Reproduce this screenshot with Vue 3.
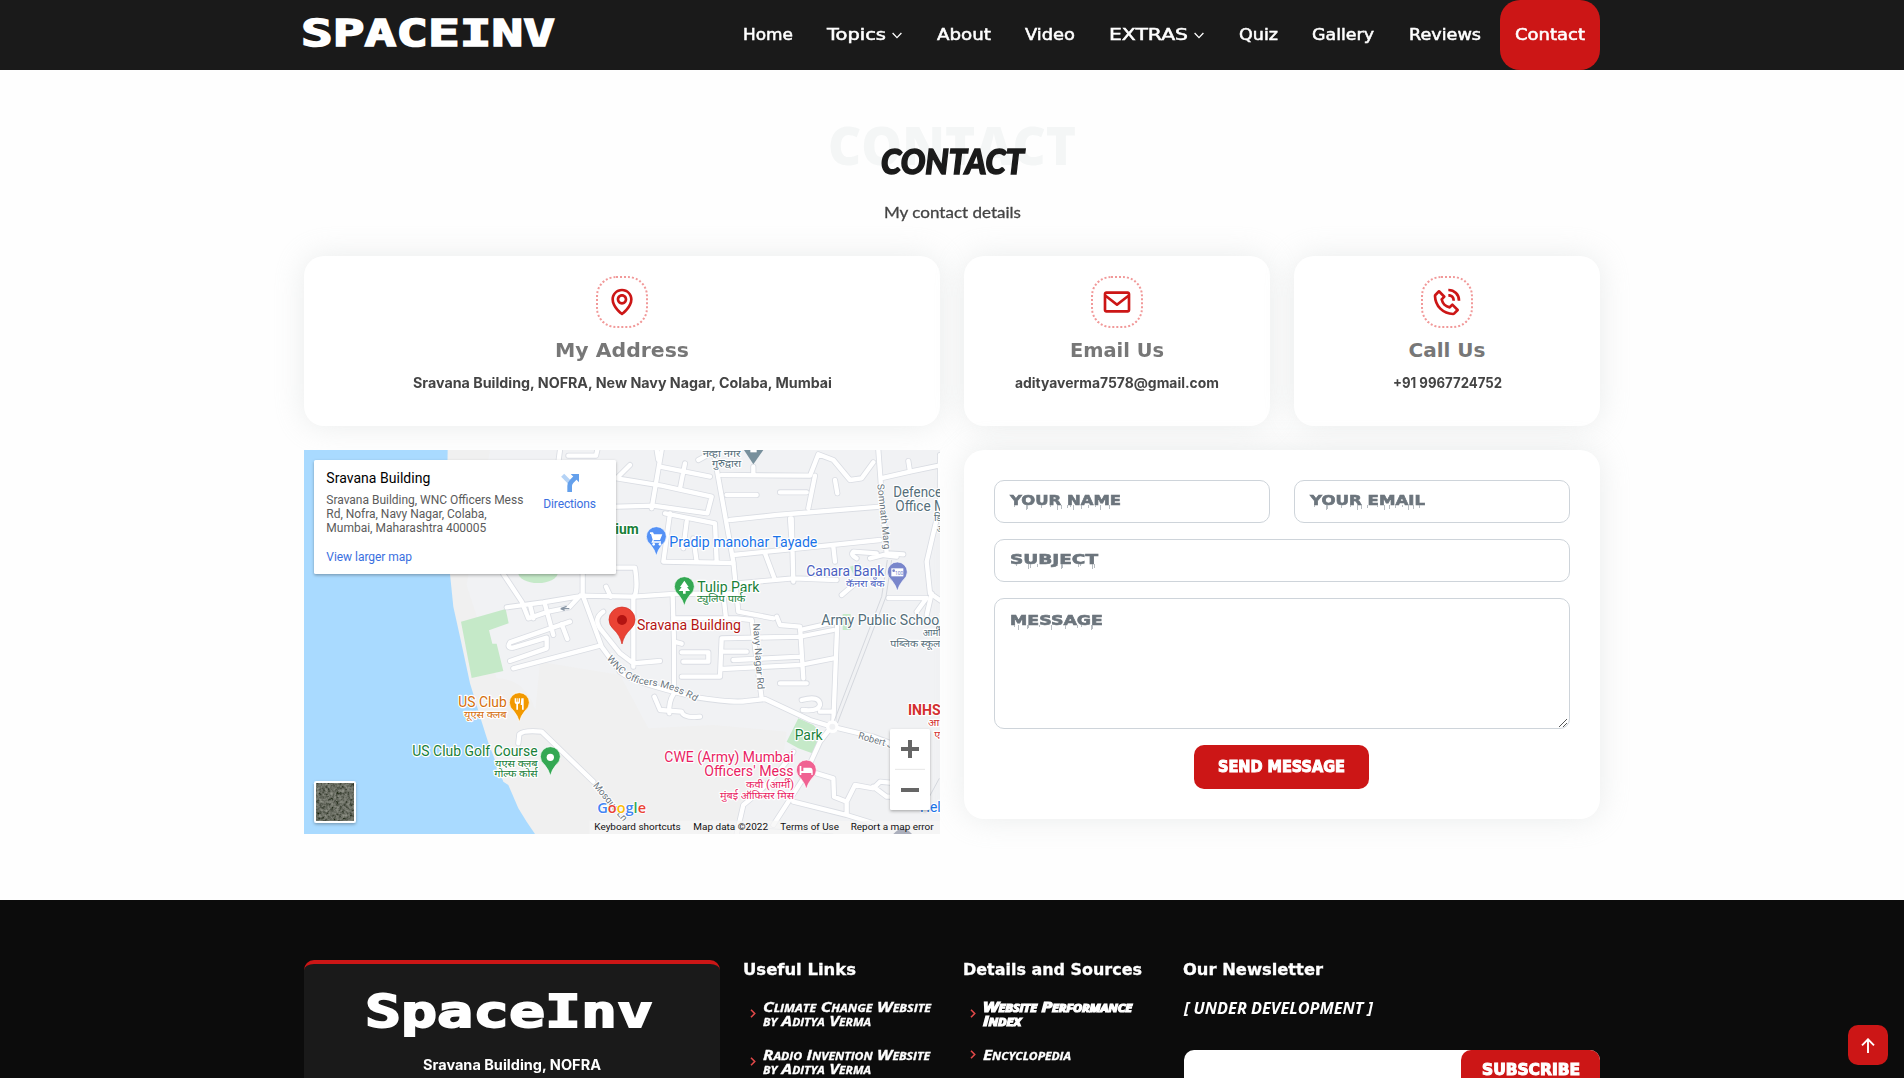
<script setup>
/* Stretches a label horizontally to the given width, in flow */
const vFit = {
  mounted(el, { value }) {
    const width = el.getBoundingClientRect().width
    el.style.transform = `scaleX(${value / width})`
    el.style.marginRight = `${value - width}px`
  },
}

const nav = [
  { label: 'Home', w: 50 },
  { label: 'Topics', w: 59, menu: true },
  { label: 'About', w: 54 },
  { label: 'Video', w: 50 },
  { label: 'EXTRAS', w: 79, menu: true },
  { label: 'Quiz', w: 39 },
  { label: 'Gallery', w: 62 },
  { label: 'Reviews', w: 72 },
  { label: 'Contact', w: 70, active: true },
]

const cards = [
  {
    title: 'My Address', tw: 134, text: 'Sravana Building, NOFRA, New Navy Nagar, Colaba, Mumbai', w: 419,
    paths: [
      'M12 14c2.206 0 4-1.794 4-4s-1.794-4-4-4-4 1.794-4 4 1.794 4 4 4zm0-6c1.103 0 2 .897 2 2s-.897 2-2 2-2-.897-2-2 .897-2 2-2z',
      'M11.42 21.814a.998.998 0 0 0 1.16 0C12.884 21.599 20.029 16.44 20 10c0-4.411-3.589-8-8-8S4 5.589 4 9.995c-.029 6.445 7.116 11.604 7.42 11.819zM12 4c3.309 0 6 2.691 6 6.005.021 4.438-4.388 8.423-6 9.73-1.611-1.308-6.021-5.294-6-9.735 0-3.309 2.691-6 6-6z',
    ],
  },
  {
    title: 'Email Us', tw: 94, text: 'adityaverma7578@gmail.com', w: 204,
    paths: ['M20 4H4c-1.103 0-2 .897-2 2v12c0 1.103.897 2 2 2h16c1.103 0 2-.897 2-2V6c0-1.103-.897-2-2-2zm0 2v.511l-8 6.223-8-6.222V6h16zM4 18V9.044l7.386 5.745a.994.994 0 0 0 1.228 0L20 9.044 20.002 18H4z'],
  },
  {
    title: 'Call Us', tw: 77, text: '+91 9967724752', w: 109,
    paths: [
      'M16.57 22a2 2 0 0 0 1.43-.59l2.71-2.71a1 1 0 0 0 0-1.41l-4-4a1 1 0 0 0-1.41 0l-1.6 1.59a7.55 7.55 0 0 1-3-1.59 7.62 7.62 0 0 1-1.59-3l1.59-1.6a1 1 0 0 0 0-1.41l-4-4a1 1 0 0 0-1.41 0L2.59 6A2 2 0 0 0 2 7.43 15.28 15.28 0 0 0 6.3 17.7 15.28 15.28 0 0 0 16.57 22zM6 5.41 8.59 8 7.3 9.29a1 1 0 0 0-.3.91 10.12 10.12 0 0 0 2.3 4.5 10.08 10.08 0 0 0 4.5 2.3 1 1 0 0 0 .91-.27L16 15.41 18.59 18l-2 2a13.28 13.28 0 0 1-8.87-3.71A13.28 13.28 0 0 1 4 7.41zM20 11h2a8.81 8.81 0 0 0-9-9v2a6.77 6.77 0 0 1 7 7z',
      'M13 8c2.1 0 3 .9 3 3h2c0-3.22-1.78-5-5-5z',
    ],
  },
]

const fields = [
  { label: 'YOUR NAME', w: 111, kind: 'half', drips: [4, 16, 17, 31, 40, 47, 51, 57, 60, 63, 71, 78, 85, 90, 99] },
  { label: 'YOUR EMAIL', w: 115, kind: 'half', drips: [4, 16, 17, 31, 40, 47, 51, 57, 67, 74, 79, 85, 92, 98, 103, 109] },
  { label: 'SUBJECT', w: 88, kind: 'full', drips: [6, 18, 20, 27, 47, 51, 52, 68, 70, 82, 84] },
  { label: 'MESSAGE', w: 93, kind: 'area', drips: [4, 8, 17, 18, 29, 41, 55, 67, 71, 81, 82] },
]

const linkCols = [
  {
    title: 'Useful Links', tw: 113,
    items: [
      [{ t: 'Climate Change Website', w: 168 }, { t: 'by Aditya Verma', w: 108 }],
      [{ t: 'Radio Invention Website', w: 167 }, { t: 'by Aditya Verma', w: 108 }],
    ],
  },
  {
    title: 'Details and Sources', tw: 179,
    items: [
      [{ t: 'Website Performance', w: 149, heavy: true }, { t: 'Index', w: 38, heavy: true }],
      [{ t: 'Encyclopedia', w: 88 }],
    ],
  },
]

/* Street network, in the map's own units (three per pixel) */
const roads = [
  'M780 15L776 45M805 32H888L892 15M990 60L950 100L1085 122L1235 155L1222 205L1060 182L880 187',
  'M610 387L665 470L685 520L745 500L808 487L840 452M620 487L730 472L850 452L1000 455L1120 447L1300 445',
  'M848 387V450L905 605L960 680M690 480L700 520M735 478L760 570M810 530L630 592Q618 610 640 608L740 578V610L630 648M785 537L802 582M640 670L900 602M918 425L932 455M940 368H1005Q1015 430 1003 455',
  'M910 500Q880 520 900 550L960 625L1000 655L1080 648M1000 455V665M1118 455L1122 590V745Q1105 770 1108 805M1145 596L1122 590',
  'M1063 755L1080 795L1145 800Q1150 820 1200 815',
  'M655 895L658 868Q670 855 725 860L880 1010M960 680Q990 710 1180 755Q1300 775 1340 768L1395 762L1530 825L1595 845',
  'M1595 845L1560 890L1510 1000L1420 1140M1595 845L1720 875L1800 905M1480 920Q1430 1000 1330 1080L1310 1167M1550 985L1600 1000L1602 1055L1640 1070L1665 1020L1720 1030L1740 1010L1790 1015L1795 1055L1760 1055L1720 1025M1480 1070L1640 1110L1720 1135M1640 1070V1110',
  'M1070 15L1075 45M1055 190L1085 15M1080 65L1230 95M1140 130L1155 55M1195 45L1250 15M1160 230L1150 310M1110 205L1090 350L1300 354M1095 205L1245 235L1250 350M1180 280L1190 350',
  'M1240 15L1300 350L1315 500L1420 520M1265 90L1530 92L1555 28L1600 45L1650 105L1685 100L1720 52M1280 150H1370M1290 225L1430 210L1740 185M1525 190L1545 92M1440 142H1520M1605 105L1612 145M1360 65V90',
  'M1300 330L1500 310L1740 285M1395 325L1425 405M1475 220L1480 410M1600 305L1605 350M1315 415L1480 400L1610 405M1270 450L1278 520M1120 520H1310L1355 525Q1370 650 1385 760',
  'M1470 220L1475 290M1710 340L1750 330L1790 335M1670 340Q1650 330 1660 320L1730 325M1625 450L1660 420',
  'M1735 15L1742 110L1760 325L1810 328M1742 100L1830 80L1925 60M1920 30V180L1880 350L1890 445L1970 500M1765 459H1880L1850 500M1830 80L1825 48M1500 555L1612 530L1600 830L1595 845',
  'M1430 515L1440 540L1500 545L1510 700M1440 715H1520M1265 580L1500 575L1600 555M1265 580L1260 695H1145M1145 622H1225V650H1150M1265 620H1340M1265 672L1500 660L1600 640M1500 635L1300 645',
  'M1505 765Q1560 750 1560 780Q1555 800 1508 795M1560 800H1595M1895 445L1880 510',
]

const pins = [
  { x: 658, y: 830, c: '#f29900' }, { x: 751, y: 992, c: '#34a853' },
  { x: 1069, y: 332, c: '#5491f5' }, { x: 1153, y: 482, c: '#34a853' },
  { x: 1792, y: 438, c: '#7986cb' }, { x: 1519, y: 1032, c: '#f06292' },
]

const labels = [
  { t: 'US Club', x: 475, y: 786, w: 145, c: '#d56e0c' },
  { t: 'यूएस क्लब', x: 492, y: 820, w: 128, c: '#d56e0c', s: 30 },
  { t: 'US Club Golf Course', x: 337, y: 933, w: 376, c: '#188038' },
  { t: 'यूएस क्लब', x: 585, y: 965, w: 128, c: '#188038', s: 30 },
  { t: 'गोल्फ कोर्स', x: 583, y: 997, w: 130, c: '#188038', s: 30 },
  { t: 'ium', x: 946, y: 267, w: 70, c: '#188038', b: true },
  { t: 'Pradip manohar Tayade', x: 1108, y: 306, w: 444, c: '#1a73e8' },
  { t: 'Tulip Park', x: 1192, y: 441, w: 186, c: '#188038' },
  { t: 'ट्युलिप पार्क', x: 1191, y: 472, w: 145, c: '#188038', s: 30 },
  { t: 'Sravana Building', x: 1011, y: 555, w: 312, c: '#b31412' },
  { t: 'Canara Bank', x: 1519, y: 393, w: 234, c: '#4b5fc1' },
  { t: 'कॅनरा बॅंक', x: 1638, y: 426, w: 116, c: '#4b5fc1', s: 30 },
  { t: 'नव्हा नगर', x: 1208, y: 35, w: 114, c: '#546e7a', s: 30 },
  { t: 'गुरुद्वारा', x: 1236, y: 67, w: 87, c: '#546e7a', s: 30 },
  { t: 'Defence', x: 1780, y: 156, w: 146, c: '#546e7a' },
  { t: 'Office M', x: 1786, y: 198, w: 152, c: '#546e7a' },
  { t: 'डि', x: 1902, y: 228, w: 24, c: '#546e7a', s: 30 },
  { t: 'ऑ', x: 1910, y: 260, w: 26, c: '#546e7a', s: 30 },
  { t: 'Army Public School', x: 1564, y: 540, w: 364, c: '#546e7a' },
  { t: 'आर्मी', x: 1868, y: 574, w: 54, c: '#546e7a', s: 30 },
  { t: 'पब्लिक स्कूल', x: 1771, y: 606, w: 150, c: '#546e7a', s: 30 },
  { t: 'INHS', x: 1824, y: 809, w: 98, c: '#d32f2f', b: true },
  { t: 'आ', x: 1884, y: 844, w: 34, c: '#d32f2f', s: 30 },
  { t: 'ए', x: 1903, y: 878, w: 18, c: '#d32f2f', s: 30 },
  { t: 'Park', x: 1484, y: 885, w: 84, c: '#188038' },
  { t: 'CWE (Army) Mumbai', x: 1093, y: 951, w: 388, c: '#e91e63' },
  { t: "Officers' Mess", x: 1213, y: 992, w: 268, c: '#e91e63' },
  { t: 'कवी (आर्मी)', x: 1338, y: 1029, w: 144, c: '#e91e63', s: 30 },
  { t: 'मुंबई ऑफिसर मिस', x: 1260, y: 1061, w: 222, c: '#e91e63', s: 30 },
  { t: 'Hel', x: 1860, y: 1102, w: 62, c: '#1a73e8' },
]

const streets = [
  { t: 'Navy Nagar Rd', x: 1359, y: 536, r: 86, w: 198 },
  { t: 'Somnath Marg', x: 1732, y: 118, r: 84, w: 197 },
  { t: 'Robert J', x: 1673, y: 880, r: 16, w: 106 },
  { t: 'Mosque Ln', x: 878, y: 1022, r: 50, w: 142 },
]

const credits = [
  { t: 'Keyboard shortcuts', x: 883, w: 259 },
  { t: 'Map data ©2022', x: 1180, w: 224 },
  { t: 'Terms of Use', x: 1441, w: 176 },
  { t: 'Report a map error', x: 1652, w: 249 },
]
</script>

<template>
  <div class="page">
    <header class="top">
      <div class="wrap bar">
        <svg class="brand" width="262" height="40" viewBox="0 0 262 40">
          <text x="0" y="34" textLength="254" lengthAdjust="spacingAndGlyphs">SPACEINV</text>
        </svg>
        <nav class="nav">
          <a v-for="n in nav" :key="n.label" :class="{ active: n.active }">
            <span v-fit="n.w">{{ n.label }}</span>
            <svg v-if="n.menu" width="10" height="7" viewBox="0 0 10 7"><path d="M.6 1l4.4 4.6L9.4 1" /></svg>
          </a>
        </nav>
      </div>
    </header>

    <main class="wrap main">
      <div class="title">
        <span class="ghost"><b v-fit="248">CONTACT</b></span>
        <h2><span v-fit="143">CONTACT</span></h2>
        <p><span v-fit="137">My contact details</span></p>
      </div>

      <div class="grid">
        <section v-for="(c, i) in cards" :key="c.title" class="card info" :class="{ wide: i === 0 }">
          <div class="ring">
            <svg width="32" height="32" viewBox="0 0 24 24"><path v-for="p in c.paths" :key="p" :d="p" /></svg>
          </div>
          <h3><span v-fit="c.tw">{{ c.title }}</span></h3>
          <p><span v-fit="c.w">{{ c.text }}</span></p>
        </section>

        <svg class="map wide" width="636" height="384" viewBox="12 15 1908 1152">
          <defs>
            <filter id="noise" x="0" y="0" width="1" height="1">
              <feTurbulence type="fractalNoise" baseFrequency=".12" numOctaves="3" seed="4" />
              <feColorMatrix values=".4 0 0 0 -.06  .4 0 0 0 -.05  .36 0 0 0 -.06  0 0 0 0 1" />
            </filter>
            <filter id="drop" x="-10%" y="-10%" width="120%" height="130%">
              <feDropShadow dx="0" dy="4" stdDeviation="5" flood-opacity=".3" />
            </filter>
            <path id="wnc" d="M920 640Q975 716 1045 720Q1120 728 1190 772" />
          </defs>
          <rect x="12" y="15" width="1908" height="1152" fill="#f1f2f4" />
          <path d="M400 15H570L500 420L590 700Q700 700 720 860L1020 1167H600L430 600zM720 650L960 690L1045 850L1240 840L1460 860L1440 1000L1330 1080L1290 1167H900L700 860z" fill="#f0f0f0" />
          <path d="M12 15H443L440 200L450 387L460 485L480 575L510 715L545 830L565 893L610 1010L625 1020L655 1090L680 1130L705 1167H12z" fill="#a9daff" />
          <g fill="#c5e9c8">
            <path d="M483 530L617 492L626 535L567 556L577 596H590L610 678L515 699zM1460 890L1495 820L1540 840L1570 870L1545 928L1495 910z" />
            <ellipse cx="714" cy="382" rx="60" ry="32" /><path d="M1628 507H1652V555H1628zM1650 365L1680 355L1665 400z" />
          </g>
          <g class="casing"><path v-for="r in roads" :key="r" :d="r" /></g>
          <g class="road"><path v-for="r in roads" :key="r" :d="r" /></g>
          <path d="M1762 345L1745 455L1600 835M1775 345L1758 455L1612 835M1918 1000L1880 1070M1400 1150L1600 1167" fill="none" stroke="#d5d8de" stroke-width="3" />
          <circle cx="1597" cy="845" r="14" fill="#f1f2f4" stroke="#fff" stroke-width="10" />
          <path d="M782 491L800 484M782 491L794 496M782 491H808" stroke="#8996a5" stroke-width="4" fill="none" />
          <g class="street">
            <text><textPath href="#wnc" textLength="305" lengthAdjust="spacingAndGlyphs">WNC Officers Mess Rd</textPath></text>
            <text v-for="s in streets" :key="s.t" :transform="`translate(${s.x} ${s.y}) rotate(${s.r})`" :textLength="s.w" lengthAdjust="spacingAndGlyphs">{{ s.t }}</text>
          </g>
          <g v-for="p in pins" :key="p.x" :transform="`translate(${p.x} ${p.y})`">
            <path d="M0 0Q-5-18-16-31Q-30-43-30-57A30 30 0 0 1 30-57Q30-43 16-31Q5-18 0 0z" :fill="p.c" stroke="#fff" stroke-width="2" />
          </g>
          <g fill="#fff">
            <path d="M644 760V772Q644 777 649 777V794H654V777Q660 777 660 772V760H656V770H653V760H650V770H648V760zM664 760H671V794H666V780H662z" />
            <circle cx="751" cy="937" r="11" />
            <path d="M1050 262H1059L1062 268H1087L1080 285H1062L1060 289H1083V293H1054L1058 284L1053 267H1050z" /><circle cx="1061" cy="298" r="4" /><circle cx="1080" cy="298" r="4" />
            <path d="M1153 407L1140 426H1145L1136 438H1149V446H1157V438H1170L1161 426H1166z" />
            <path d="M1774 370H1810V394H1774z" />
            <path d="M1499 963H1504V978H1510V968H1530Q1538 968 1538 978V990H1534V984H1504V990H1499z" />
          </g>
          <circle cx="1781" cy="377" r="4" fill="#7986cb" />
          <text x="1785" y="391" font-size="15" fill="#7986cb">100</text>
          <path d="M1332 15H1390L1360 58z" fill="#78909c" /><path d="M1351 15H1370V22H1351z" fill="#fff" />
          <path d="M966 597Q960 570 940 552Q927 540 927 524A39 38 0 0 1 1005 524Q1005 540 992 552Q972 570 966 597z" fill="#ea4335" stroke="#d22e22" stroke-width="2" />
          <circle cx="966" cy="525" r="15" fill="#b31412" />
          <g class="labels">
            <text v-for="l in labels" :key="l.t + l.y" :x="l.x" :y="l.y" :textLength="l.w" lengthAdjust="spacingAndGlyphs" :fill="l.c" :font-size="l.s || 42" :font-weight="l.b ? 700 : 400">{{ l.t }}</text>
          </g>
          <text x="892" y="1103" class="google" textLength="146" lengthAdjust="spacingAndGlyphs"><tspan fill="#4285f4">G</tspan><tspan fill="#ea4335">o</tspan><tspan fill="#fbbc05">o</tspan><tspan fill="#4285f4">g</tspan><tspan fill="#34a853">l</tspan><tspan fill="#ea4335">e</tspan></text>
          <path d="M868 1127H1920V1167H868z" fill="#f5f5f5" opacity=".75" />
          <path d="M1780 1167Q1808 1136 1836 1167z" fill="#abafbc" />
          <text v-for="c in credits" :key="c.t" :x="c.x" y="1155" :textLength="c.w" lengthAdjust="spacingAndGlyphs" font-size="29" fill="#111">{{ c.t }}</text>
          <g filter="url(#drop)">
            <rect x="42" y="45" width="906" height="342" rx="5" fill="#fff" />
            <rect x="1770" y="852" width="120" height="243" rx="5" fill="#fff" />
            <rect x="42" y="1008" width="126" height="126" rx="7" fill="#fff" />
          </g>
          <rect x="49" y="1015" width="112" height="112" filter="url(#noise)" />
          <path d="M1785 973H1875" stroke="#e6e6e6" stroke-width="3" />
          <path d="M1803 912H1857M1830 885V939M1803 1035H1857" stroke="#666" stroke-width="12" />
          <g class="place">
            <text x="79" y="114" textLength="312">Sravana Building</text>
            <text x="79" y="177" textLength="591">Sravana Building, WNC Officers Mess</text>
            <text x="79" y="219" textLength="481">Rd, Nofra, Navy Nagar, Colaba,</text>
            <text x="79" y="261" textLength="480">Mumbai, Maharashtra 400005</text>
            <text x="79" y="347" textLength="257" class="link">View larger map</text>
            <text x="730" y="189" textLength="158" class="link">Directions</text>
          </g>
          <path d="M788 91L808 111" stroke="#b5d3f6" stroke-width="13" />
          <path d="M809 141V123Q809 115 815 109L826 98" fill="none" stroke="#64a0ec" stroke-width="14" /><path d="M812 87H837V112z" fill="#64a0ec" />
        </svg>

        <form class="card form wide">
          <div v-for="f in fields" :key="f.label" class="field" :class="f.kind">
            <div class="ph">
              <span v-fit="f.w">{{ f.label }}</span>
              <svg class="drips" width="120" height="7" viewBox="0 0 120 7">
                <path v-for="(d, i) in f.drips" :key="d" :d="`M${d + 0.5} 0v${2 + (i * 3) % 4}`" />
              </svg>
            </div>
            <svg v-if="f.kind === 'area'" class="grip" width="9" height="9" viewBox="0 0 9 9"><path d="M0 9L8 1M4 9L8 5" /></svg>
          </div>
          <button type="button" class="send"><span v-fit="127">SEND MESSAGE</span></button>
        </form>
      </div>
    </main>

    <footer class="foot">
      <div class="wrap cols">
        <div class="about">
          <svg width="300" height="48" viewBox="0 0 300 48">
            <text x="3" y="36" textLength="288" lengthAdjust="spacingAndGlyphs">SpaceInv</text>
          </svg>
          <p><span v-fit="178">Sravana Building, NOFRA</span></p>
        </div>
        <div v-for="c in linkCols" :key="c.title" class="links">
          <h4><span v-fit="c.tw">{{ c.title }}</span></h4>
          <ul>
            <li v-for="(item, i) in c.items" :key="i">
              <svg width="6" height="9" viewBox="0 0 6 9"><path d="M1 .8l3.7 3.7L1 8.2" /></svg>
              <div class="lines"><div v-for="l in item" :key="l.t" :class="{ heavy: l.heavy }"><span v-fit="l.w">{{ l.t }}</span></div></div>
            </li>
          </ul>
        </div>
        <div class="news">
          <h4><span v-fit="140">Our Newsletter</span></h4>
          <p><span v-fit="189">[ UNDER DEVELOPMENT ]</span></p>
          <div class="subscribe"><button type="button"><span v-fit="98">SUBSCRIBE</span></button></div>
        </div>
      </div>
    </footer>

    <a class="up"><svg width="14" height="15" viewBox="0 0 14 15"><path d="M7 15V1.5M1 7.3L7 1.3l6 6" /></svg></a>
  </div>
</template>

<style>
body { margin: 0; background: #fff; }
</style>

<style scoped>
* { box-sizing: border-box; margin: 0; padding: 0; }
.page { height: 1078px; overflow: hidden; font-family: "DejaVu Sans", sans-serif; background: #fefefe; }
.wrap { width: 1296px; margin: 0 auto; }
span, b { display: inline-block; white-space: nowrap; transform-origin: 0 50%; }

.top { height: 70px; background: #1a1a1a; }
.bar { height: 70px; display: flex; justify-content: space-between; }
.brand { margin: 12px 0 0 -3px; }
.brand text { font: bold 38px "DejaVu Sans Mono", monospace; fill: #fff; stroke: #fff; stroke-width: 1.6; }
.nav { display: flex; gap: 34.4px; }
.nav a { display: flex; align-items: center; gap: 6px; color: #fff; font-size: 15px; line-height: 20px; -webkit-text-stroke: .5px #fff; }
.nav path { fill: none; stroke: #fff; stroke-width: 1.3; }
.nav .active { background: #cc1616; border-radius: 20px; padding: 0 15px; margin-left: -15px; }

.main { height: 830px; padding-top: 45px; }
.title { height: 141px; text-align: center; display: flex; flex-direction: column; align-items: center; }
.ghost { font: bold 53px/60px "Open Sans", sans-serif; color: #f4f6f6; height: 60px; }
.title h2 { position: relative; margin-top: -34px; font: italic 900 34px/40px Lato, sans-serif; color: #1a1a1a; -webkit-text-stroke: 1.5px #1a1a1a; }
.title p { margin-top: 21px; font: 16px/20px Lato, sans-serif; color: #444; -webkit-text-stroke: .3px #444; }

.grid { display: grid; grid-template-columns: repeat(4, 306px); gap: 24px; align-items: start; }
.wide { grid-column: span 2; }
.card { background: #fff; border-radius: 20px; box-shadow: 0 0 30px rgba(210, 215, 214, .45); }
.info { height: 170px; padding-top: 20px; display: flex; flex-direction: column; align-items: center; }
.ring { width: 52px; height: 52px; border: 2px dotted #f19999; border-radius: 20px; display: flex; align-items: center; justify-content: center; }
.ring path { fill: #cc1616; }
.info h3 { margin-top: 8px; font-size: 20px; line-height: 28px; color: #777; }
.info p { margin-top: 8px; font: bold 14px/22px Inter, sans-serif; color: #444; }

.map { display: block; font-family: Roboto, "Noto Sans", sans-serif; }
.casing path, .road path { fill: none; stroke-linecap: round; stroke-linejoin: round; }
.casing path { stroke: #dadde3; stroke-width: 18; }
.road path { stroke: #fff; stroke-width: 13; }
.street text { font-size: 29px; fill: #6b7680; stroke: #fff; stroke-width: 6; paint-order: stroke; }
.labels text { stroke: #fff; stroke-width: 7; paint-order: stroke; stroke-linejoin: round; }
.google { font: 600 44px "Open Sans", sans-serif; stroke: #fff; stroke-width: 5; paint-order: stroke; }
.place text { font-size: 36px; fill: #5b5b5b; }
.place text:first-child { font-size: 42px; fill: #000; }
.place .link { fill: #3a6fe0; }

.form { height: 369px; padding: 30px; display: flex; flex-wrap: wrap; justify-content: center; column-gap: 24px; row-gap: 16px; align-content: flex-start; }
.field { position: relative; height: 43px; width: 576px; border: 1px solid #ced4da; border-radius: 10px; padding: 9px 15px; }
.half { width: 276px; }
.area { height: 131px; padding-top: 11px; }
.ph { position: relative; font-weight: bold; font-size: 13.5px; line-height: 20px; color: #6c757d; -webkit-text-stroke: .6px #6c757d; }
.drips { position: absolute; left: 0; top: 15px; }
.drips path { stroke: #a4abb1; stroke-width: .8; }
.grip { position: absolute; right: 1px; bottom: 1px; }
.grip path { stroke: #555; stroke-width: 1; }
button { border: 0; background: #cc1616; color: #fff; border-radius: 10px; font: bold 16px/20px "DejaVu Sans Condensed", "DejaVu Sans", sans-serif; -webkit-text-stroke: 1px #fff; }
.send { width: 175px; height: 44px; padding-bottom: 1px; margin-right: 1px; }

.foot { height: 178px; padding-top: 60px; background: #0c0c0c; color: #fff; }
.cols { display: flex; }
.about { width: 416px; height: 240px; background: #1a1a1a; border-top: 4px solid #cc1616; border-radius: 10px; text-align: center; padding-top: 27px; }
.about svg { display: block; margin: 0 auto; }
.about text { font: bold 44px "DejaVu Sans Mono", monospace; fill: #fff; stroke: #fff; stroke-width: 1.8; }
.about p { margin-top: 16px; font: bold 14px/20px Inter, sans-serif; }
.links { width: 196px; margin-left: 24px; flex: none; }
h4 { font-size: 15px; line-height: 20px; margin-left: -1px; -webkit-text-stroke: .3px #fff; }
ul { list-style: none; margin-top: 18px; }
li { display: flex; align-items: center; gap: 7px; padding-left: 6px; margin-bottom: 18px; font: italic bold small-caps 14px/14px "Open Sans", sans-serif; -webkit-text-stroke: .3px #fff; }
.lines { padding-top: 2px; }
.heavy { -webkit-text-stroke: 1.2px #fff; }
li path { fill: none; stroke: #e04848; stroke-width: 1.6; }
.news { width: 416px; margin-left: 24px; flex: none; }
.news p { margin-top: 17px; font: italic bold 16px/22px "Open Sans", sans-serif; }
.subscribe { margin-top: 31px; height: 44px; background: #fff; border-radius: 10px; display: flex; justify-content: flex-end; }
.subscribe button { width: 139px; padding-bottom: 4px; }
.up { position: absolute; left: 1848px; top: 1025px; width: 40px; height: 40px; background: #cc1616; border-radius: 10px; display: flex; align-items: center; justify-content: center; }
.up path { fill: none; stroke: #fff; stroke-width: 1.9; }
</style>
